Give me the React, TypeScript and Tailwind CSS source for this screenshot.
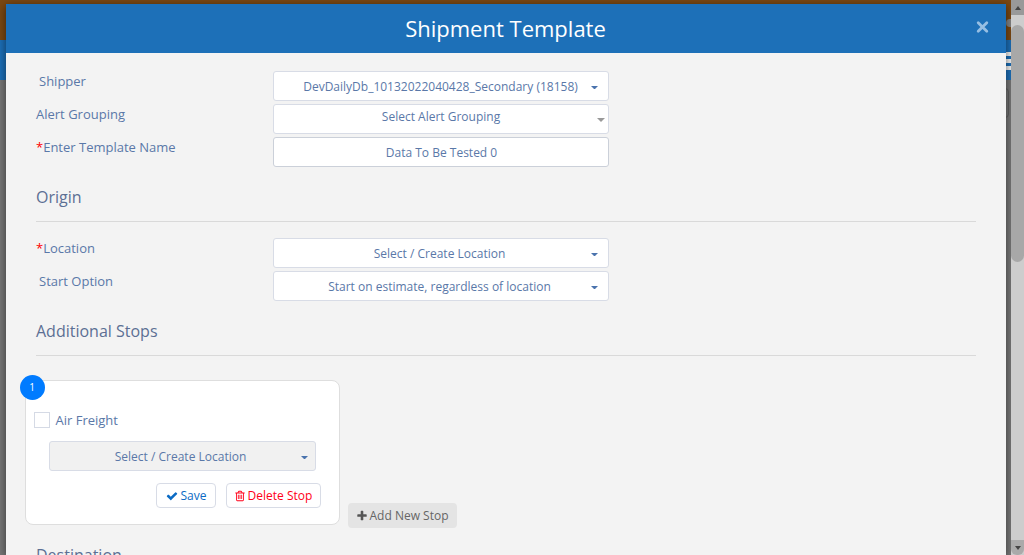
import React from 'react';

function Glyph({ d, className }: { d: string; className: string }) {
  return (
    <svg viewBox="0 0 1792 1792" fill="currentColor" className={`shrink-0 ${className}`}>
      <path d={d} />
    </svg>
  );
}

const CHECK =
  'M1671 566q0 40-28 68l-724 724-136 136q-28 28-68 28t-68-28l-136-136-362-362q-28-28-28-68t28-68l136-136q28-28 68-28t68 28l294 295 656-657q28-28 68-28t68 28l136 136q28 28 28 68z';
const PLUS =
  'M1600 736v192q0 40-28 68t-68 28h-416v416q0 40-28 68t-68 28h-192q-40 0-68-28t-28-68v-416h-416q-40 0-68-28t-28-68v-192q0-40 28-68t68-28h416v-416q0-40 28-68t68-28h192q40 0 68 28t28 68v416h416q40 0 68 28t28 68z';
const TRASH =
  'M704 736v576q0 14-9 23t-23 9h-64q-14 0-23-9t-9-23v-576q0-14 9-23t23-9h64q14 0 23 9t9 23zm256 0v576q0 14-9 23t-23 9h-64q-14 0-23-9t-9-23v-576q0-14 9-23t23-9h64q14 0 23 9t9 23zm256 0v576q0 14-9 23t-23 9h-64q-14 0-23-9t-9-23v-576q0-14 9-23t23-9h64q14 0 23 9t9 23zm128 724v-948h-896v948q0 22 7 40.5t14.5 27 10.5 8.5h832q3 0 10.5-8.5t14.5-27 7-40.5zm-672-1076h448l-48-117q-7-9-17-11h-317q-10 2-17 11zm928 32v64q0 14-9 23t-23 9h-96v948q0 83-47 143.5t-113 60.5h-832q-66 0-113-58.5t-47-141.5v-952h-96q-14 0-23-9t-9-23v-64q0-14 9-23t23-9h309l70-167q15-37 54-63t79-26h320q40 0 79 26t54 63l70 167h309q14 0 23 9t9 23z';

function Caret({ className }: { className: string }) {
  return (
    <svg viewBox="0 0 8 4" fill="currentColor" className={`shrink-0 ${className}`}>
      <path d="M0 0h8L4 4z" />
    </svg>
  );
}

function Select({ text, className, textClass = 'pl-[14px]' }: { text: string; className: string; textClass?: string }) {
  return (
    <button
      className={`flex h-[30px] items-center rounded-[3px] border border-[#d8dce6] text-[12px] text-[#5a78a8] ${className}`}
    >
      <span className={`flex-1 pt-px text-center ${textClass}`}>{text}</span>
      <Caret className="mt-[3px] h-[3.5px] w-[7px] text-[#4a73ad]" />
    </button>
  );
}

function Row({ label, required, indent, children }: { label: string; required?: boolean; indent?: boolean; children: React.ReactNode }) {
  return (
    <div className="flex h-[30px]">
      <label className={`w-[237px] shrink-0 text-[13px] leading-5 ${indent ? 'pl-[3px]' : ''}`}>
        {required && <span className="text-[#ff0000]">*</span>}
        {label}
      </label>
      {children}
    </div>
  );
}

function Section({ title }: { title: string }) {
  return (
    <h2 className="h-[37px] shrink-0 border-b border-[#d9d9d9] text-[16px] leading-6 text-[#5c6f94]">{title}</h2>
  );
}

function Scrollbar() {
  return (
    <div className="flex h-full w-[13px] flex-col overflow-hidden bg-[#cdcdcd]">
      <div className="flex h-[15px] shrink-0 items-center justify-center bg-[#999]">
        <svg viewBox="0 0 6 4" className="h-1 w-1.5" fill="#444"><path d="M0 4h6L3 0z" /></svg>
      </div>
      <div className="mt-[10px] h-[237px] shrink-0 rounded-full bg-[#a8a8a8]" />
      <div className="mt-auto flex h-[15px] shrink-0 items-center justify-center rounded-b-md bg-[#aaa]">
        <svg viewBox="0 0 6 4" className="h-1 w-1.5" fill="#444"><path d="M0 0h6L3 4z" /></svg>
      </div>
    </div>
  );
}

export default function App() {
  return (
    <div className="relative h-[555px] w-[1024px] overflow-hidden bg-[#777] font-['Open_Sans',sans-serif] text-[#5a78a8]">
      <div className="flex h-10 justify-end bg-[#7b4813] pt-[19px] pr-[13px]">
        <div className="h-2 w-[5px] rounded-l-full bg-[#858585]" />
      </div>
      <div className="flex h-10 items-center justify-end bg-[#1c6fb8]">
        <div className="flex w-[18px] flex-col gap-[3px] pt-[2px]">
          <div className="h-1 bg-[#f2f2f2]" />
          <div className="h-1 bg-[#f2f2f2]" />
          <div className="h-1 bg-[#f2f2f2]" />
        </div>
      </div>
      <div className="mt-2 mr-[15px] ml-2 h-[30px] rounded-[4px] border border-[#606060]" />

      <div className="absolute inset-0 flex">
        <main className="mt-1 ml-1.5 flex w-[1000px] shrink-0 flex-col bg-[#f3f3f3] shadow-[0_2px_9px_rgba(0,0,0,0.55)]">
          <header className="flex h-[49px] shrink-0 items-center bg-[#1d70b8] pr-[17px] pl-[29px]">
            <h1 className="flex-1 pb-[2px] text-center text-[22px] leading-8 text-white">Shipment Template</h1>
            <svg viewBox="0 0 13 13" className="h-[13px] w-[13px] -translate-y-[1.5px]" stroke="#97bfe3" strokeWidth="2.8" strokeLinecap="round">
              <path d="M2.2 2.2l8.6 8.6M10.8 2.2l-8.6 8.6" />
            </svg>
          </header>

          <div className="flex min-h-0 flex-1 flex-col overflow-hidden px-[30px] pt-[18px]">
            <div className="flex shrink-0 flex-col gap-[3px]">
              <Row label="Shipper" indent>
                <Select text="DevDailyDb_10132022040428_Secondary (18158)" className="w-[336px] bg-white pr-[10px]" textClass="pl-[16px]" />
              </Row>
              <Row label="Alert Grouping">
                <div className="flex w-[336px] items-center rounded-[3px] border border-[#d8dce6] bg-white pr-[3px] text-[12px]">
                  <span className="flex-1 pb-1 pl-[11px] text-center">Select Alert Grouping</span>
                  <Caret className="mt-px h-1 w-2 text-[#999]" />
                </div>
              </Row>
              <Row label="Enter Template Name" required>
                <div className="flex w-[336px] items-center justify-center rounded-[3px] border border-[#cbd0d9] bg-white pt-px pl-px text-[12px]">
                  Data To Be Tested 0
                </div>
              </Row>
            </div>

            <div className="mt-[18px] mb-4 flex flex-col"><Section title="Origin" /></div>
            <div className="flex shrink-0 flex-col gap-[3px]">
              <Row label="Location" required>
                <Select text="Select / Create Location" className="w-[336px] bg-white pr-[10px]" />
              </Row>
              <Row label="Start Option" indent>
                <Select text="Start on estimate, regardless of location" className="w-[336px] bg-white pr-[10px]" />
              </Row>
            </div>

            <div className="mt-[18px] mb-6 flex flex-col"><Section title="Additional Stops" /></div>
            <div className="-ml-[11px] flex h-[148px] shrink-0 items-end gap-2">
              <section className="relative mb-[3px] flex h-[145px] w-[315px] flex-col rounded-lg border border-[#dedede] bg-white pt-[31px] pr-[18px] pl-2">
                <span className="absolute -top-1.5 -left-1.5 flex h-[25px] w-[25px] items-center justify-center rounded-full bg-[#007bff] pr-px text-[10px] text-white">
                  1
                </span>
                <label className="flex h-4 items-center gap-[6px] text-[13px]">
                  <span className="h-4 w-4 border border-[#d5dae5] bg-white" />
                  <span className="-ml-[0.5px] pt-[2px]">Air Freight</span>
                </label>
                <Select text="Select / Create Location" className="mt-[13px] ml-[15px] w-[267px] shrink-0 bg-[#f1f1f1] pr-[7px]" textClass="pl-[10px]" />
                <div className="mt-3 flex justify-end gap-[10px] text-[12px]">
                  <button className="flex h-[25px] w-[60px] items-center justify-center gap-[3px] rounded-[4px] border border-[#d8dce6] text-[#0b6bc4]">
                    <Glyph d={CHECK} className="h-3 w-3" />
                    Save
                  </button>
                  <button className="flex h-[25px] w-[95px] items-center justify-center gap-[2px] rounded-[4px] border border-[#d8dce6] pr-px text-[#ff0018]">
                    <Glyph d={TRASH} className="h-3 w-3" />
                    Delete Stop
                  </button>
                </div>
              </section>
              <button className="flex h-[25px] w-[109px] items-center justify-center gap-[2px] rounded-[4px] bg-[#e4e4e4] pr-px text-[12px] text-[#666]">
                <Glyph d={PLUS} className="h-3 w-3 text-[#555]" />
                Add New Stop
              </button>
            </div>

            <div className="mt-[15px] flex shrink-0 flex-col"><Section title="Destination" /></div>
          </div>
        </main>
        <div className="ml-[5px] h-full w-[13px] shrink-0"><Scrollbar /></div>
      </div>
    </div>
  );
}
